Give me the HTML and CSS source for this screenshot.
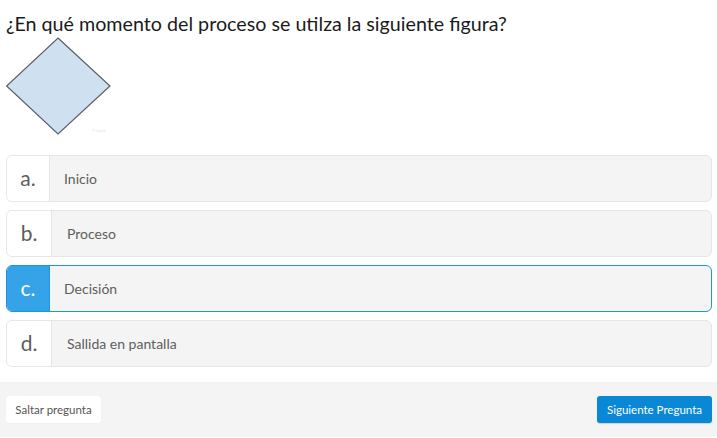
FILE: index.html
```html
<!DOCTYPE html>
<html lang="es">
<head>
<meta charset="utf-8">
<title>Pregunta</title>
<link rel="stylesheet" href="styles.css">
</head>
<body>
<main class="quiz">
  <h1 class="question">¿En qué momento del proceso se utilza la siguiente figura?</h1>
  <div class="figure">
    <svg width="110" height="104" viewBox="0 0 110 104">
      <polygon points="52,1 104,49 52,97 0.6,49" fill="#cfe0f1" stroke="#5a5f66" stroke-width="1.2"/>
      <text x="86" y="95" font-size="4" fill="#e2e2d0" font-family="Lato, sans-serif">© Lucid</text>
    </svg>
  </div>
  <ul class="options">
    <li class="option"><span class="letter">a.</span><span class="label">Inicio</span></li>
    <li class="option"><span class="letter wide">b.</span><span class="label">Proceso</span></li>
    <li class="option selected"><span class="letter">c.</span><span class="label">Decisión</span></li>
    <li class="option"><span class="letter wide">d.</span><span class="label">Sallida en pantalla</span></li>
  </ul>
</main>
<footer class="footer">
  <button class="btn skip">Saltar pregunta</button>
  <button class="btn next">Siguiente Pregunta</button>
</footer>
</body>
</html>
```

FILE: styles.css
```css
* { box-sizing: border-box; }
html, body { margin: 0; padding: 0; background: #fff; }
body { font-family: Lato, "Noto Sans", sans-serif; color: #222; }
.quiz { padding: 0 5px 0 6px; }
.question {
  margin: 0;
  padding-top: 11px;
  font-size: 19.7px;
  font-weight: 400;
  line-height: 26px;
  color: #1a1a1a;
}
.figure { height: 118px; }
.figure svg { display: block; margin-left: 0; }
.options { list-style: none; margin: 0; padding: 0; display: flex; flex-direction: column; gap: 8px; }
.option {
  display: flex;
  height: 47px;
  border: 1px solid #e6e6e6;
  border-radius: 6px;
  background: #f4f4f4;
  overflow: hidden;
}
.letter {
  width: 43px;
  background: #fff;
  border-right: 1px solid #e6e6e6;
  display: flex;
  align-items: center;
  justify-content: center;
  font-size: 21px;
  color: #5e5e5e;
  padding-bottom: 3px;
}
.letter.wide { width: 45px; }
.label {
  display: flex;
  align-items: center;
  padding-left: 14px;
  padding-bottom: 1px;
  font-size: 14px;
  color: #5e5e5e;
}
.letter.wide + .label { padding-left: 15px; }
.option.selected { border-color: #1f94e0; }
.option.selected .letter { background: #35a3e8; color: #fff; border-right-color: #1f94e0; }
.footer {
  margin-top: 15px;
  height: 55px;
  background: #f4f4f4;
  display: flex;
  justify-content: space-between;
  align-items: flex-start;
  padding: 14px 5px 0 6px;
}
.btn {
  font-family: Lato, "Noto Sans", sans-serif;
  font-size: 11.5px;
  height: 27px;
  border-radius: 3px;
  border: none;
  cursor: pointer;
}
.skip { width: 95px; background: #fff; color: #555; box-shadow: 0 0 1px rgba(0,0,0,0.08); }
.next { width: 115px; background: #0a88d6; color: #fff; box-shadow: 0 1px 1px rgba(0,0,0,0.15); }
```
